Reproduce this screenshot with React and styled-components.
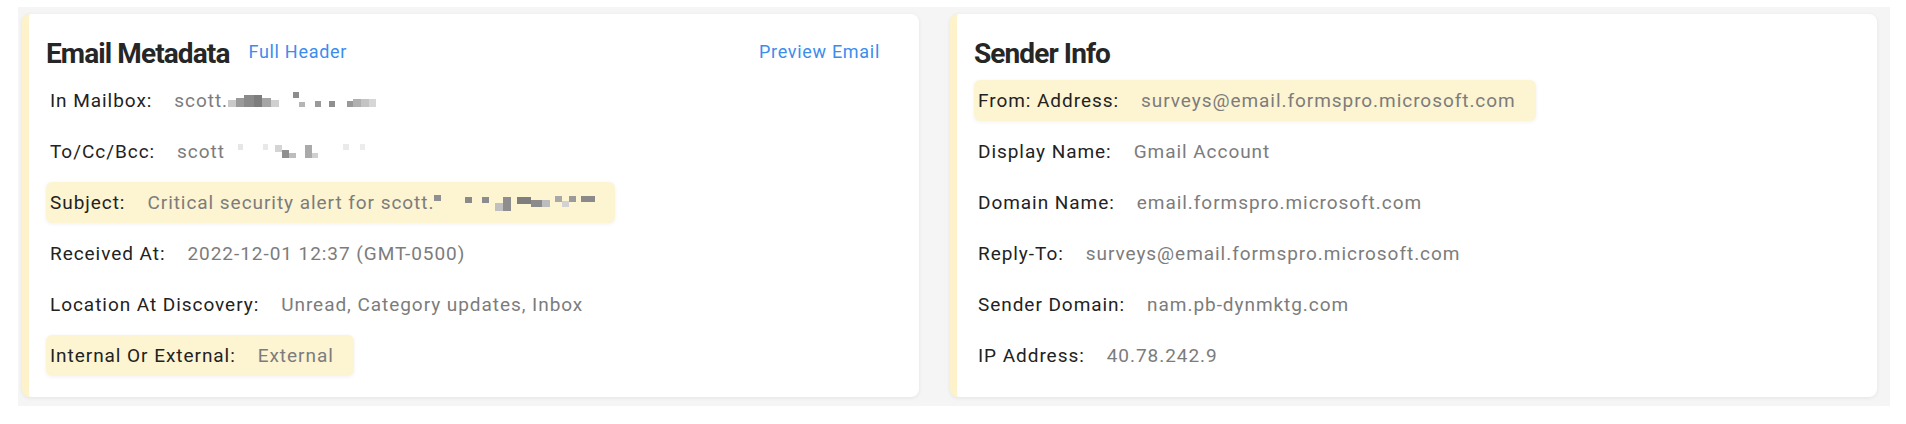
import React from 'react'
import styled, { createGlobalStyle } from 'styled-components'

const GlobalStyle = createGlobalStyle`
  body {
    margin: 0;
    background: #fff;
    font-family: Roboto, "Liberation Sans", sans-serif;
  }
`

const Page = styled.div`
  padding: 7px 16px 18px 18px;
`

const Panel = styled.div`
  display: grid;
  grid-template-columns: 897fr 927fr;
  gap: 31px;
  padding: 7px 13px 9px 4px;
  background: #f5f5f5;
`

const Card = styled.section`
  background: #fff;
  border-left: 7px solid #fdf2c9;
  border-radius: 8px;
  box-shadow: 0 1px 4px rgba(0, 0, 0, 0.07);
  padding: 24px 24px 21px 17px;
`

const Header = styled.div`
  display: flex;
  align-items: center;
  height: 32px;
  margin-bottom: 10px;
`

const Title = styled.h2`
  margin: 0 19px 0 0;
  font-size: 28px;
  font-weight: 700;
  letter-spacing: -0.9px;
  line-height: 32px;
  color: #262626;
`

const HeaderLink = styled.a`
  font-size: 18px;
  letter-spacing: 0.7px;
  color: #3b8ded;
  text-decoration: none;
  cursor: pointer;
  margin-top: -6px;
  ${p => p.$right && 'margin-left: auto; margin-right: 15px;'}
`

const Rows = styled.div`
  display: flex;
  flex-direction: column;
  gap: 10px;
`

const Row = styled.div`
  align-self: flex-start;
  display: flex;
  align-items: center;
  height: 41px;
  padding: 0 20px 0 4px;
  border-radius: 6px;
  background: ${p => (p.$highlight ? '#fdf4d2' : 'transparent')};
  box-shadow: ${p => (p.$highlight ? '0 1px 4px rgba(0, 0, 0, 0.06)' : 'none')};
  font-size: 19px;
  letter-spacing: 0.95px;
  white-space: nowrap;
`

const Label = styled.span`
  color: #222;
`

const Value = styled.span`
  display: inline-flex;
  align-items: center;
  margin-left: 22px;
  color: #7c7c7c;
`

const Mosaic = styled.span`
  display: inline-flex;
  align-items: flex-end;
  height: 16px;
  margin-left: ${p => p.$gap || 0}px;
`

const Pixel = styled.span`
  display: inline-block;
  width: ${p => p.$w}px;
  height: ${p => p.$h}px;
  margin-bottom: ${p => p.$y || 0}px;
  background: ${p => p.$c};
`

// pixelated (redacted) parts of addresses: [width, height, colour, lift]
const redactions = {
  mailbox: [
    [8, 7, '#c9c9c9', 2], [8, 9, '#9a9a9a', 2], [10, 12, '#8a8a8a', 2], [8, 12, '#7d7d7d', 2],
    [9, 9, '#a5a5a5', 2], [8, 7, '#cfcfcf', 2], [14, 0, 'transparent', 0], [6, 6, '#8d8d8d', 11],
    [6, 5, '#b5b5b5', 2], [10, 0, 'transparent', 0], [6, 6, '#9a9a9a', 2], [8, 0, 'transparent', 0],
    [6, 6, '#8f8f8f', 2], [12, 0, 'transparent', 0], [6, 6, '#999', 2], [8, 8, '#b0b0b0', 2],
    [8, 8, '#c4c4c4', 2], [7, 8, '#d6d6d6', 2]
  ],
  to: [
    [9, 0, 'transparent', 0], [5, 6, '#e6e6e6', 10], [20, 0, 'transparent', 0], [5, 6, '#e8e8e8', 10],
    [7, 0, 'transparent', 0], [7, 7, '#d4d4d4', 8], [7, 8, '#8f8f8f', 2], [7, 5, '#bdbdbd', 2],
    [9, 0, 'transparent', 0], [7, 13, '#aaa', 2], [6, 5, '#d0d0d0', 2], [25, 0, 'transparent', 0],
    [6, 6, '#eaeaea', 10], [11, 0, 'transparent', 0], [5, 6, '#ececec', 10]
  ],
  subject: [
    [7, 6, '#909090', 10], [24, 0, 'transparent', 0], [7, 6, '#8a8a8a', 8], [10, 0, 'transparent', 0],
    [7, 6, '#8c8c8c', 8], [6, 0, 'transparent', 0], [8, 8, '#c0c0c0', 0], [8, 14, '#8e8e8e', 0],
    [6, 0, 'transparent', 0], [14, 7, '#7e7e7e', 7], [11, 7, '#8b8b8b', 4], [8, 7, '#bdbdbd', 4],
    [5, 0, 'transparent', 0], [7, 6, '#a8a8a8', 9], [7, 6, '#d2d2d2', 4], [7, 6, '#9b9b9b', 9],
    [5, 0, 'transparent', 0], [14, 6, '#8a8a8a', 9]
  ]
}

const Redacted = ({ name, gap }) => (
  <Mosaic $gap={gap}>
    {redactions[name].map(([w, h, c, y], i) => (
      <Pixel key={i} $w={w} $h={h} $c={c} $y={y} />
    ))}
  </Mosaic>
)

const metadata = [
  { label: 'In Mailbox:', value: 'scott.', redact: 'mailbox' },
  { label: 'To/Cc/Bcc:', value: 'scott', redact: 'to', gap: 4 },
  { label: 'Subject:', value: 'Critical security alert for scott.', redact: 'subject', highlight: true },
  { label: 'Received At:', value: '2022-12-01 12:37 (GMT-0500)' },
  { label: 'Location At Discovery:', value: 'Unread, Category updates, Inbox' },
  { label: 'Internal Or External:', value: 'External', highlight: true }
]

const sender = [
  { label: 'From: Address:', value: 'surveys@email.formspro.microsoft.com', highlight: true },
  { label: 'Display Name:', value: 'Gmail Account' },
  { label: 'Domain Name:', value: 'email.formspro.microsoft.com' },
  { label: 'Reply-To:', value: 'surveys@email.formspro.microsoft.com' },
  { label: 'Sender Domain:', value: 'nam.pb-dynmktg.com' },
  { label: 'IP Address:', value: '40.78.242.9' }
]

const InfoRows = ({ items }) => (
  <Rows>
    {items.map(item => (
      <Row key={item.label} $highlight={item.highlight}>
        <Label>{item.label}</Label>
        <Value>
          {item.value}
          {item.redact && <Redacted name={item.redact} gap={item.gap} />}
        </Value>
      </Row>
    ))}
  </Rows>
)

const App = () => (
  <Page>
    <GlobalStyle />
    <Panel>
      <Card>
        <Header>
          <Title>Email Metadata</Title>
          <HeaderLink>Full Header</HeaderLink>
          <HeaderLink $right>Preview Email</HeaderLink>
        </Header>
        <InfoRows items={metadata} />
      </Card>
      <Card>
        <Header>
          <Title>Sender Info</Title>
        </Header>
        <InfoRows items={sender} />
      </Card>
    </Panel>
  </Page>
)

export default App
